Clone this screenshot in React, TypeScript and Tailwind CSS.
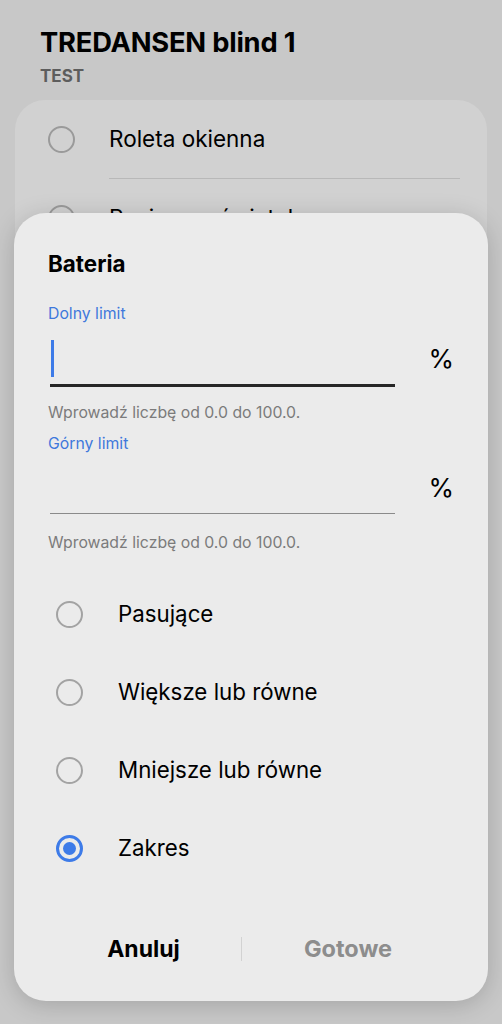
import React from "react";

const font = { fontFamily: "Inter, 'Noto Sans', sans-serif" };

const Radio = ({ checked = false }: { checked?: boolean }) =>
  checked ? (
    <div className="w-[27px] h-[27px] rounded-full border-[3px] border-[#3d7be8] flex items-center justify-center shrink-0">
      <div className="w-[13px] h-[13px] rounded-full bg-[#3d7be8]" />
    </div>
  ) : (
    <div className="w-[27px] h-[27px] rounded-full border-2 border-[#a3a3a3] shrink-0" />
  );

const options = ["Pasujące", "Większe lub równe", "Mniejsze lub równe", "Zakres"];

export default function App() {
  return (
    <div
      className="relative w-[502px] h-[1024px] overflow-hidden bg-[#c8c8c8] text-black"
      style={font}
    >
      {/* Underlying page (dimmed) */}
      <div className="pt-[27px] px-[40px]">
        <div className="text-[27.3px] leading-[32px] font-bold tracking-[-0.2px]">TREDANSEN blind 1</div>
        <div className="text-[17px] leading-[22px] font-bold text-[#5d5d5d] mt-[6px]">TEST</div>
      </div>
      <div className="mx-[15px] mt-[13px] rounded-[30px] bg-[#d1d1d1] pb-[40px]">
        <div className="flex items-center h-[78px] pl-[33px]">
          <div className="w-[27px] h-[27px] rounded-full border-2 border-[#9a9a9a]" />
          <div className="ml-[34px] text-[22.5px]">Roleta okienna</div>
        </div>
        <div className="ml-[94px] mr-[27px] h-px bg-[#b8b8b8]" />
        <div className="flex items-center h-[78px] pl-[33px]">
          <div className="w-[27px] h-[27px] rounded-full border-2 border-[#9a9a9a]" />
          <div className="ml-[34px] text-[22.5px]">Rozjemca świateł</div>
        </div>
      </div>

      {/* Dialog */}
      <div className="absolute left-[14px] top-[213px] w-[474px] h-[788px] rounded-[32px] bg-[#ebebeb] shadow-[0_4px_24px_rgba(0,0,0,0.18)] flex flex-col">
        <div className="px-[34px] pt-[37px]">
          <div className="text-[22.4px] leading-[28px] font-bold">Bateria</div>

          <div className="mt-[26px] text-[15.8px] leading-[20px] text-[#3f78dc]">Dolny limit</div>
          <div className="flex items-end">
            <div className="ml-[2px] w-[346px] h-[63px] border-b-[3px] border-[#262626] flex items-end pb-[7px]">
              <div className="ml-px w-[3px] h-[37px] bg-[#3d7be8]" />
            </div>
            <div className="ml-[33px] mb-[13px] text-[26px] leading-[30px]">%</div>
          </div>
          <div className="mt-[16px] text-[15.8px] leading-[20px] text-[#7b7b7b]">Wprowadź liczbę od 0.0 do 100.0.</div>

          <div className="mt-[11px] text-[15.8px] leading-[20px] text-[#3f78dc]">Górny limit</div>
          <div className="flex items-end">
            <div className="ml-[2px] w-[346px] h-[60px] border-b border-[#8a8a8a]" />
            <div className="ml-[33px] mb-[11px] text-[26px] leading-[30px]">%</div>
          </div>
          <div className="mt-[19px] text-[15.8px] leading-[20px] text-[#7b7b7b]">Wprowadź liczbę od 0.0 do 100.0.</div>
        </div>

        <div className="mt-[22px] px-[42px]">
          {options.map((o, i) => (
            <div key={o} className="flex items-center h-[78px]">
              <Radio checked={i === 3} />
              <div className="ml-[35px] text-[22.3px]">{o}</div>
            </div>
          ))}
        </div>

        <div className="mt-auto mb-[27px] flex items-center h-[50px]">
          <div className="w-[227px] pl-[32px] text-center text-[23px] font-bold">Anuluj</div>
          <div className="w-px h-[24px] bg-[#d2d2d2]" />
          <div className="flex-1 pr-[34px] text-center text-[23.5px] font-bold text-[#8d8d8d]">Gotowe</div>
        </div>
      </div>
    </div>
  );
}
